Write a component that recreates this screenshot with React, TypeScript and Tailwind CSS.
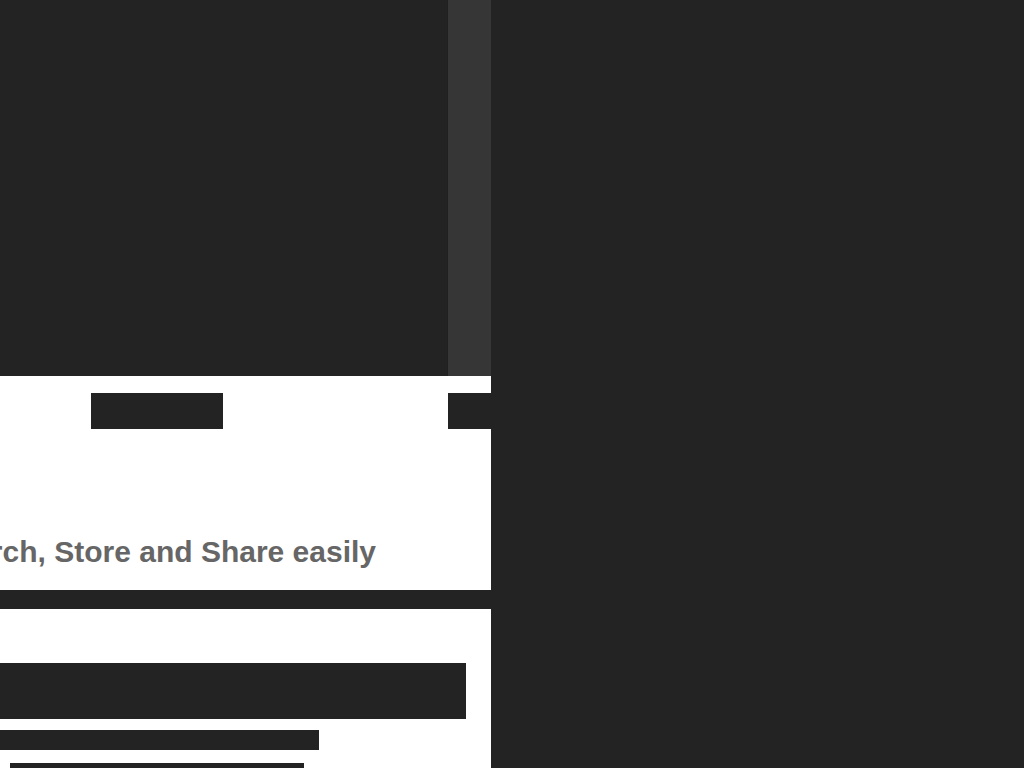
import React from "react";

const Block: React.FC<{ className: string }> = ({ className }) => (
  <div className={`bg-[#232323] shrink-0 ${className}`} />
);

export default function App() {
  return (
    <div className="w-[1024px] h-[768px] bg-[#232323] flex overflow-hidden font-['Liberation_Sans',Arial,sans-serif]">
      {/* left column */}
      <div className="w-[491px] shrink-0 flex flex-col overflow-hidden">
        {/* top media area */}
        <div className="h-[376px] flex shrink-0">
          <div className="flex-1 bg-[#232323]" />
          <div className="w-px bg-[#202020]" />
          <div className="w-[43px] bg-[#363636]" />
        </div>

        {/* hero */}
        <div className="h-[214px] bg-white flex flex-col shrink-0 overflow-hidden">
          <div className="flex pt-[17px]">
            <Block className="ml-[91px] w-[132px] h-[36px]" />
            <Block className="ml-[225px] w-[43px] h-[36px]" />
          </div>
          <div className="mt-[108px] w-[376px] flex justify-end">
            <h2 className="whitespace-nowrap text-[30px] leading-[30px] font-bold text-[#666666]">
              Search, Store and Share easily
            </h2>
          </div>
        </div>

        <div className="h-[19px] bg-[#232323] shrink-0" />

        {/* lower section */}
        <div className="flex-1 bg-white flex flex-col pt-[54px]">
          <Block className="w-[466px] h-[56px]" />
          <Block className="mt-[11px] w-[319px] h-[20px]" />
          <Block className="mt-[13px] ml-[10px] w-[294px] h-[20px]" />
        </div>
      </div>

      {/* right side */}
      <div className="flex-1 bg-[#232323]" />
    </div>
  );
}
